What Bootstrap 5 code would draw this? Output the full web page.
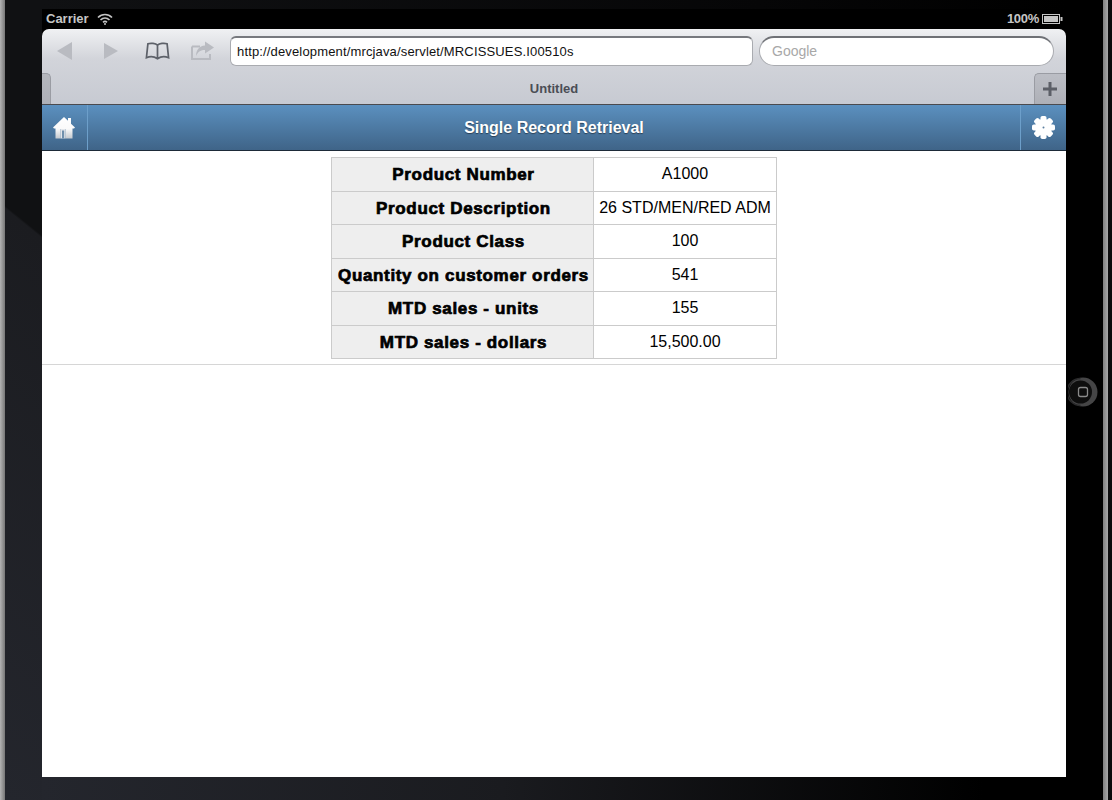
<!DOCTYPE html>
<html lang="en"><head><meta charset="utf-8"><title>Single Record Retrieval</title>
<link href="https://cdn.jsdelivr.net/npm/bootstrap@5.3.0/dist/css/bootstrap.min.css" rel="stylesheet">
<style>
html,body{height:100%;margin:0;background:#000;overflow:hidden}
body{font-family:"Liberation Sans",Arial,sans-serif}
.frame{height:800px;width:1112px}
.bez-left{width:42px;flex:none;display:flex}
.bez-metal{width:5px;background:linear-gradient(90deg,#b4b4b4,#777)}
.bez-panel{flex:1;background:linear-gradient(219deg,#101113 0,#101113 183px,#1b1c20 185px,#24262d 100%)}
.bez-right{width:46px;flex:none;display:flex}
.bez-black{width:37px;background:#000;padding:0 3px 16px 0}
.bez-edge{width:5px;background:linear-gradient(90deg,#7f7f7f,#a8a8a8)}
.bez-rim{width:4px;background:#0c0c0d}
.screen{width:1024px;flex:none}
.bez-top{height:9px;background:linear-gradient(90deg,#101113,#060607 70%,#000)}
.bez-bottom{height:23px;background:linear-gradient(90deg,#24262d,#1a1b1f 45%,#000 92%)}
.statusbar{height:20px;background:#000;color:#c5c5c5;font-size:13px;font-weight:700;padding:0 3px 0 4px}
.battery-pct{letter-spacing:-.3px;margin-right:-1px}
.chrome{height:76px;background:linear-gradient(180deg,#f0f1f3 0,#d2d4da 30px,#c7cad2 100%);border-radius:7px 7px 0 0;border-bottom:1px solid #4a4a4e}
.toolbar{height:44px;padding:7px 12px 0 0}
.tool{width:46px}
.urlbox{width:523px;height:30px;background:#fff;border:1px solid #a9abb0;border-top:2px solid #77797e;border-radius:6px;font-size:13px;letter-spacing:.15px;color:#111;padding:0 6px;margin-left:4px}
.searchbox{width:295px;height:30px;background:#fff;border:1px solid #a9abb0;border-top:2px solid #6f7176;border-radius:15px;font-size:14px;color:#a8a8a8;padding:0 12px;margin-left:6px}
.tabrow{height:31px;color:#4a4d55;font-size:13px;font-weight:700}
.tab-stub{width:9px;flex:none;background:linear-gradient(180deg,#b5b7bd,#aeb0b7);border:1px solid #9a9ca3;border-left:0;border-bottom:0;border-radius:0 5px 0 0}
.tab-title{padding-left:23px}
.tab-plus{width:32px;flex:none;background:linear-gradient(180deg,#bcbec5,#aeb0b7);border:1px solid #9a9ca3;border-right:0;border-bottom:0;border-radius:5px 0 0 0;padding:0 2px 1px 0}
.jq-header{height:46px;background:linear-gradient(180deg,#5b90bf 0,#3f6488 100%);border-bottom:1px solid #1d2a38;color:#fff;font-size:16px;font-weight:700;text-shadow:0 1px 1px #2a3f55}
.hd-btn{width:46px;height:100%}
.hd-left{border-right:1px solid #6d9fca;padding-right:1px}
.hd-right{border-left:1px solid #6d9fca}
.content{height:626px;background:#fff}
.detail{padding:6px 0 5px;border-bottom:1px solid #d6d6d6}
.rec-table{border-collapse:collapse;margin:0 auto;width:446px;color:#000}
.rec-table th,.rec-table td{border:1px solid #cbcbcb;text-align:center;padding:0;height:33.5px;vertical-align:middle}
.rec-table th{width:262px;background:#eee;font-size:17px;font-weight:700;-webkit-text-stroke:.7px #000;letter-spacing:.65px;padding:1px 0 0 2px}
.rec-table td{font-size:16px;font-weight:400}
</style></head>
<body>
<div class="frame d-flex">
  <div class="bez-left"><div class="bez-metal"></div><div class="bez-panel"></div></div>
  <div class="screen d-flex flex-column">
    <div class="bez-top"></div>
    <div class="statusbar d-flex align-items-center justify-content-between">
      <div class="d-flex align-items-center gap-2"><span>Carrier</span>
        <svg width="16" height="12" viewBox="0 0 16 12"><path d="M1 4.500C5 .5 11 .5 15 4.500M3.500 7c2.700-2.600 6.300-2.600 9 0M6 9.300c1.200-1 2.800-1 4 0" fill="none" stroke="#c5c5c5" stroke-width="1.700"/><circle cx="8" cy="11" r="1" fill="#c5c5c5"/></svg>
      </div>
      <div class="d-flex align-items-center gap-1"><span class="battery-pct">100%</span>
        <svg width="21" height="10" viewBox="0 0 21 10"><rect x=".5" y=".5" width="17" height="9" fill="none" stroke="#c5c5c5"/><rect x="2" y="2" width="14" height="6" fill="#c5c5c5"/><rect x="18.500" y="3" width="2" height="4" fill="#c5c5c5"/></svg>
      </div>
    </div>
    <div class="chrome">
      <div class="toolbar d-flex align-items-start">
        <div class="tool d-flex justify-content-center pt-1"><svg width="20" height="22" viewBox="0 0 20 22"><path d="M17 2v18L2 11z" fill="#b9bbc1"/></svg></div>
        <div class="tool d-flex justify-content-center pt-1"><svg width="20" height="22" viewBox="0 0 20 22"><path d="M3 3v16l14-8z" fill="#b9bbc1"/></svg></div>
        <div class="tool d-flex justify-content-center pt-1"><svg width="25" height="22" viewBox="0 0 26 22"><path d="M13 5C11 3 6 2.500 3 3.500L1.500 18C5 16.500 10 17 13 19C16 17 21 16.500 24.500 18L23 3.500C20 2.500 15 3 13 5ZM13 5V19" fill="none" stroke="#5d6169" stroke-width="1.800"/></svg></div>
        <div class="tool d-flex justify-content-center pt-1"><svg width="26" height="22" viewBox="0 0 26 22"><path d="M2 6.500h8M2 6.500V19h18v-5" fill="none" stroke="#b9bbc1" stroke-width="2"/><path d="M15 1.500l9 6-9 6V10c-4 0-7 1.500-9 6 0-6 3-10 9-10.500z" fill="#b9bbc1"/></svg></div>
        <div class="urlbox d-flex align-items-center">http://development/mrcjava/servlet/MRCISSUES.I00510s</div>
        <div class="searchbox d-flex align-items-center">Google</div>
      </div>
      <div class="tabrow d-flex align-items-stretch">
        <div class="tab-stub"></div>
        <div class="tab-title flex-grow-1 d-flex align-items-center justify-content-center">Untitled</div>
        <div class="tab-plus d-flex align-items-center justify-content-center"><svg width="14" height="14" viewBox="0 0 14 14"><path d="M7 0v14M0 7h14" stroke="#5c5f67" stroke-width="3"/></svg></div>
      </div>
    </div>
    <div class="jq-header d-flex align-items-center justify-content-between">
      <div class="hd-btn hd-left d-flex align-items-center justify-content-center"><svg width="22" height="23" viewBox="0 0 22 23"><defs><linearGradient id="hg" x1="0" y1="0" x2="0" y2="1"><stop offset="0" stop-color="#fff"/><stop offset=".55" stop-color="#fafafa"/><stop offset="1" stop-color="#c4c9cf"/></linearGradient></defs><path fill-rule="evenodd" d="M0 11.500L11 1l4 3.800V2h3v5.700L22 11.500l-1 1h-1.500V22.500h-17V12.500H1zM7.500 13v9.500h5V13z" fill="url(#hg)"/><path d="M7.500 13h5v9.500h-5z" fill="#e3e6ea"/><path d="M9 14.500h2.200v8H9z" fill="#6f8fac"/></svg></div>
      <div>Single Record Retrieval</div>
      <div class="hd-btn hd-right d-flex align-items-center justify-content-center"><svg width="23" height="23" viewBox="0 0 23 23"><g fill="#fff"><circle cx="11.500" cy="11.500" r="8.500"/><rect x="8.500" y="0" width="6" height="23" rx="1.800"/><rect x="8.500" y="0" width="6" height="23" rx="1.800" transform="rotate(45 11.500 11.500)"/><rect x="8.500" y="0" width="6" height="23" rx="1.800" transform="rotate(90 11.500 11.500)"/><rect x="8.500" y="0" width="6" height="23" rx="1.800" transform="rotate(135 11.500 11.500)"/></g><circle cx="11.500" cy="11.500" r="1" fill="#5d7f9f"/></svg></div>
    </div>
    <div class="content">
      <div class="detail">
        <table class="rec-table">
          <tr><th>Product Number</th><td>A1000</td></tr>
          <tr><th>Product Description</th><td>26 STD/MEN/RED ADM</td></tr>
          <tr><th>Product Class</th><td>100</td></tr>
          <tr><th>Quantity on customer orders</th><td>541</td></tr>
          <tr><th>MTD sales - units</th><td>155</td></tr>
          <tr><th>MTD sales - dollars</th><td>15,500.00</td></tr>
        </table>
      </div>
    </div>
    <div class="bez-bottom"></div>
  </div>
  <div class="bez-right">
    <div class="bez-black d-flex align-items-center justify-content-center">
      <svg width="30" height="30" viewBox="0 0 30 30"><circle cx="15" cy="15" r="14.500" fill="#454546"/><circle cx="12.500" cy="15" r="11.500" fill="#0e0e0e"/><path d="M12.500 1.500A13.500 13.500 0 0 0 12.500 28.500" fill="none" stroke="#2a2a2b" stroke-width="1.500"/><rect x="10.500" y="10.500" width="9" height="9" rx="2" fill="none" stroke="#8a8a8a" stroke-width="1.300"/></svg>
    </div>
    <div class="bez-edge"></div>
    <div class="bez-rim"></div>
  </div>
</div>
</body></html>
